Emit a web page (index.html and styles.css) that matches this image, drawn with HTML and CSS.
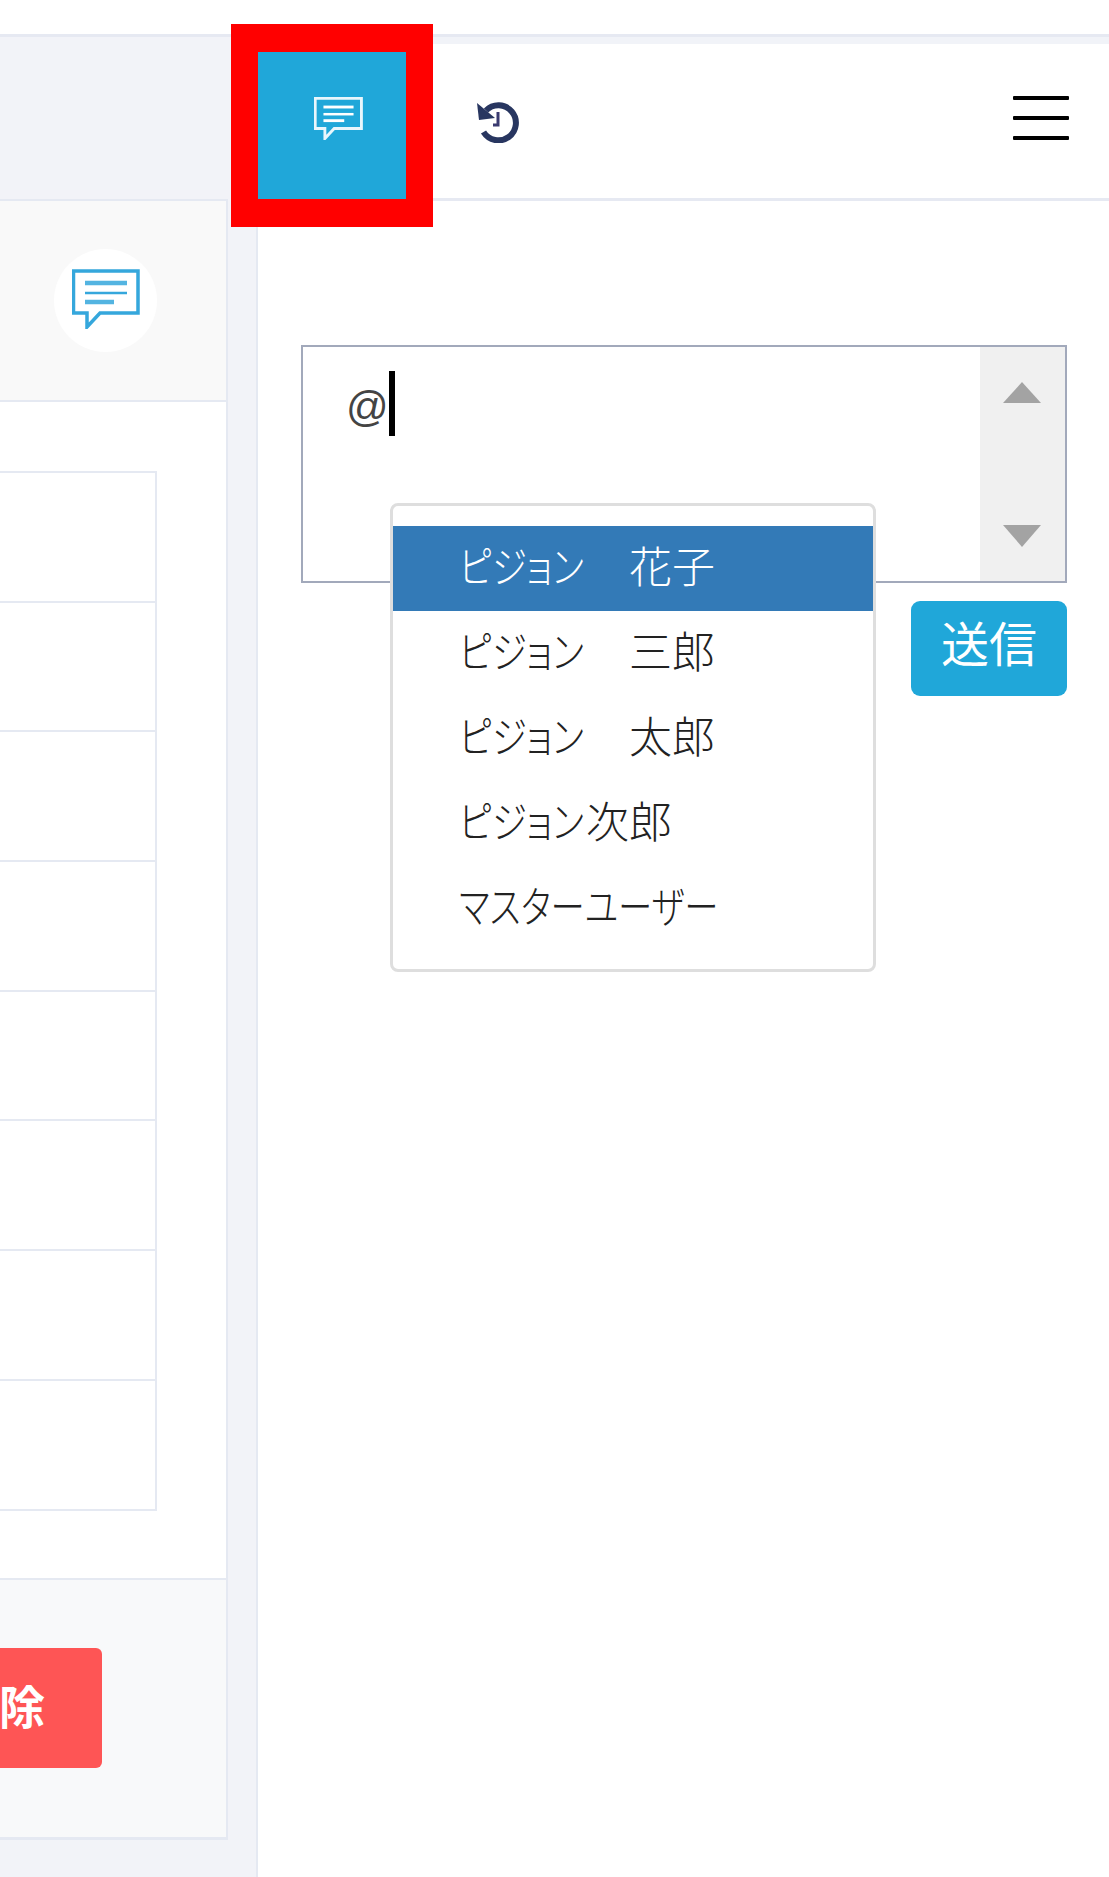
FILE: index.html
```html
<!DOCTYPE html>
<html lang="ja">
<head>
<meta charset="utf-8">
<title>コメント</title>
<link rel="stylesheet" href="styles.css">
</head>
<body>
<div class="topstrip"></div>
<div class="layout">
  <section class="left">
    <div class="toolbar"></div>
    <div class="panel">
      <div class="panel-head">
        <div class="bubble">
          <svg class="icon-chat" viewBox="0 0 68 60" aria-hidden="true"><path class="chat-frame" d="M1.5 2H66V44H28L15 58V44H1.5Z"/><path class="chat-lines" d="M13 14H55"/><path class="chat-mid" d="M13 24H55"/><path class="chat-lines" d="M13 33H42"/></svg>
        </div>
      </div>
      <div class="panel-body">
        <div class="rows">
          <div class="row"></div><div class="row"></div><div class="row"></div><div class="row"></div>
          <div class="row"></div><div class="row"></div><div class="row"></div><div class="row"></div>
        </div>
      </div>
      <div class="panel-foot">
        <button class="btn-danger" type="button">削除</button>
      </div>
    </div>
  </section>
  <section class="right">
    <header class="tabs">
      <div class="tab tab-active">
        <svg class="icon-chat-sm" viewBox="0 0 68 60" aria-hidden="true"><path class="chat-frame" d="M1.5 2H66V44H28L15 58V44H1.5Z"/><path class="chat-lines" d="M13 14H55"/><path class="chat-mid" d="M13 24H55"/><path class="chat-lines" d="M13 33H42"/></svg>
      </div>
      <svg class="icon-history" viewBox="0 0 42 42" aria-hidden="true"><path class="hist-arc" d="M9 9.500A17.500 17.500 0 1 1 6.500 31"/><path class="hist-head" d="M0 2 2 19 18 17Z"/><path class="hist-hand" d="M21 11V24H16"/></svg>
      <div class="hamburger"><span></span><span></span><span></span></div>
    </header>
    <div class="composer">
      <div class="inputbox">
        <div class="typed"><span class="at">@</span><span class="caret"></span></div>
        <div class="scrollbar"><span class="arrow-up"></span><span class="arrow-down"></span></div>
      </div>
      <ul class="mention-menu">
        <li class="mention mention-on"><span class="kana kana-family">ピジョン</span>　花子</li>
        <li class="mention"><span class="kana kana-family">ピジョン</span>　三郎</li>
        <li class="mention"><span class="kana kana-family">ピジョン</span>　太郎</li>
        <li class="mention"><span class="kana kana-family">ピジョン</span>次郎</li>
        <li class="mention"><span class="kana kana-master">マスターユーザー</span></li>
      </ul>
      <div class="actions"><button class="btn-send" type="button">送信</button></div>
    </div>
    <div class="callout"></div>
  </section>
</div>
</body>
</html>
```
FILE: styles.css
```css
* { box-sizing: border-box; }
html, body { margin: 0; padding: 0; }
body {
  width: 1109px;
  height: 1877px;
  overflow: hidden;
  background: #f2f3f8;
  font-family: "Liberation Sans", "Noto Sans CJK JP", sans-serif;
  color: #333;
}
.topstrip {
  height: 37px;
  background: #fff;
  border-bottom: 3px solid #e6e9f2;
}
.layout { display: flex; height: 1840px; }

/* left */
.left {
  width: 258px;
  flex: none;
  border-right: 2px solid #e5e9f2;
}
.toolbar { height: 162px; }
.panel {
  width: 228px;
  border-right: 2px solid #e5e9f2;
  border-top: 2px solid #e5e9f2;
  border-bottom: 3px solid #e5e9f2;
}
.panel-head {
  height: 201px;
  background: #f9f9f9;
  border-bottom: 2px solid #e5e9f2;
  display: flex;
  align-items: center;
  justify-content: flex-end;
  padding-right: 69px;
}
.bubble {
  width: 103px;
  height: 103px;
  border-radius: 50%;
  background: #fff;
  display: flex;
  align-items: center;
  justify-content: center;
}
.icon-chat { width: 68px; height: 60px; color: #35a7dc; margin-left: 1px; margin-top: -3px; }
.icon-chat-sm { width: 49px; height: 43px; color: #fff; margin-left: 13px; margin-top: -15px; }
.chat-frame { fill: none; stroke: currentColor; stroke-width: 3.500; }
.chat-lines { fill: none; stroke: currentColor; stroke-width: 4.500; opacity: .85; }
.chat-mid { fill: none; stroke: currentColor; stroke-width: 2.500; }
.icon-chat-sm .chat-frame { stroke-width: 4; opacity: .9; }
.icon-chat-sm .chat-mid { stroke-width: 3.500; }
.icon-chat-sm .chat-lines { stroke-width: 4; opacity: 1; }
.panel-body {
  background: #fff;
  padding: 69px 69px 67px 0;
}
.rows {
  border-top: 2px solid #e5e9f2;
  border-right: 2px solid #e5e9f2;
}
.row {
  height: 129.700px;
  border-bottom: 2px solid #e5e9f2;
}
.panel-foot {
  height: 259px;
  background: #f8f9fa;
  border-top: 2px solid #e5e9f2;
  display: flex;
  align-items: center;
  justify-content: flex-end;
  padding-right: 124px;
}
.btn-danger {
  flex: none;
  height: 120px;
  padding: 0 57px 8px;
  border: 0;
  border-radius: 6px;
  background: #fe5555;
  color: #fff;
  font: bold 46px "Liberation Sans", "Noto Sans CJK JP", sans-serif;
  white-space: nowrap;
}

/* right */
.right { flex: 1; position: relative; background: #fff; }
.tabs {
  height: 164px;
  background: #fff;
  border-top: 7px solid #f1f3f8;
  border-bottom: 3px solid #e6e9f2;
  display: flex;
  align-items: flex-start;
  padding-right: 40px;
}
.tab {
  width: 148px;
  height: 148px;
  margin-top: 8px;
  display: flex;
  align-items: center;
  justify-content: center;
}
.tab-active { background: #20a7d9; }
.icon-history { width: 42px; height: 42px; margin: 57px 0 0 71px; flex: none; }
.hist-arc { fill: none; stroke: #283660; stroke-width: 6; }
.hist-head { fill: #283660; }
.hist-hand { fill: none; stroke: #3a3a70; stroke-width: 3; }
.hamburger {
  margin: 52px 0 0 auto;
  width: 56px;
  display: flex;
  flex-direction: column;
  gap: 16px;
}
.hamburger span { display: block; height: 4px; background: #000; border-radius: 1px; }

.callout {
  position: absolute;
  left: -27px;
  top: -13px;
  width: 202px;
  height: 203px;
  border: 27px solid #f00;
  border-top-width: 28px;
  border-bottom-width: 28px;
}

.composer {
  position: relative;
  padding: 144px 42px 0 43px;
}
.inputbox {
  height: 238px;
  border: 2px solid #a2a9bb;
  display: flex;
}
.typed {
  flex: 1;
  padding: 24px 0 0 43px;
  font-size: 42px;
  line-height: 65px;
  color: #444;
  display: flex;
  align-items: flex-start;
}
.at { display: block; margin-top: 3px; }
.caret {
  display: block;
  width: 6px;
  height: 65px;
  background: #000;
}
.scrollbar {
  width: 85px;
  background: #f0f0f0;
  display: flex;
  flex-direction: column;
  align-items: center;
  justify-content: space-between;
  padding: 35px 2px 34px 0;
}
.arrow-up, .arrow-down {
  width: 0;
  height: 0;
  border-left: 19px solid transparent;
  border-right: 19px solid transparent;
}
.arrow-up { border-bottom: 21px solid #a3a3a3; }
.arrow-down { border-top: 22px solid #a3a3a3; }

.mention-menu {
  position: absolute;
  left: 132px;
  top: 302px;
  width: 486px;
  height: 469px;
  margin: 0;
  padding: 20px 0 0;
  list-style: none;
  background: #fff;
  border: 3px solid #dedede;
  border-radius: 8px;
}
.mention {
  height: 85px;
  padding-left: 66px;
  font: 300 43px/77px "Noto Sans CJK JP", sans-serif;
  color: #222;
  white-space: nowrap;
}
.mention-on { background: #337ab7; color: #fff; }
/* Narrow proportional kana as drawn by the reference's UI font */
.kana {
  display: inline-block;
  font-feature-settings: "palt";
  transform-origin: 0 50%;
  vertical-align: top;
}
.kana-family { width: 127px; transform: scaleX(.82); }
.kana-master { width: 254px; transform: scaleX(.8); }

.actions {
  display: flex;
  justify-content: flex-end;
  margin-top: 18px;
}
.btn-send {
  width: 156px;
  height: 95px;
  border: 0;
  border-radius: 9px;
  background: #20a7d9;
  color: #fff;
  padding: 0 0 15px;
  font: 48px "Noto Sans CJK JP", sans-serif;
}
```
